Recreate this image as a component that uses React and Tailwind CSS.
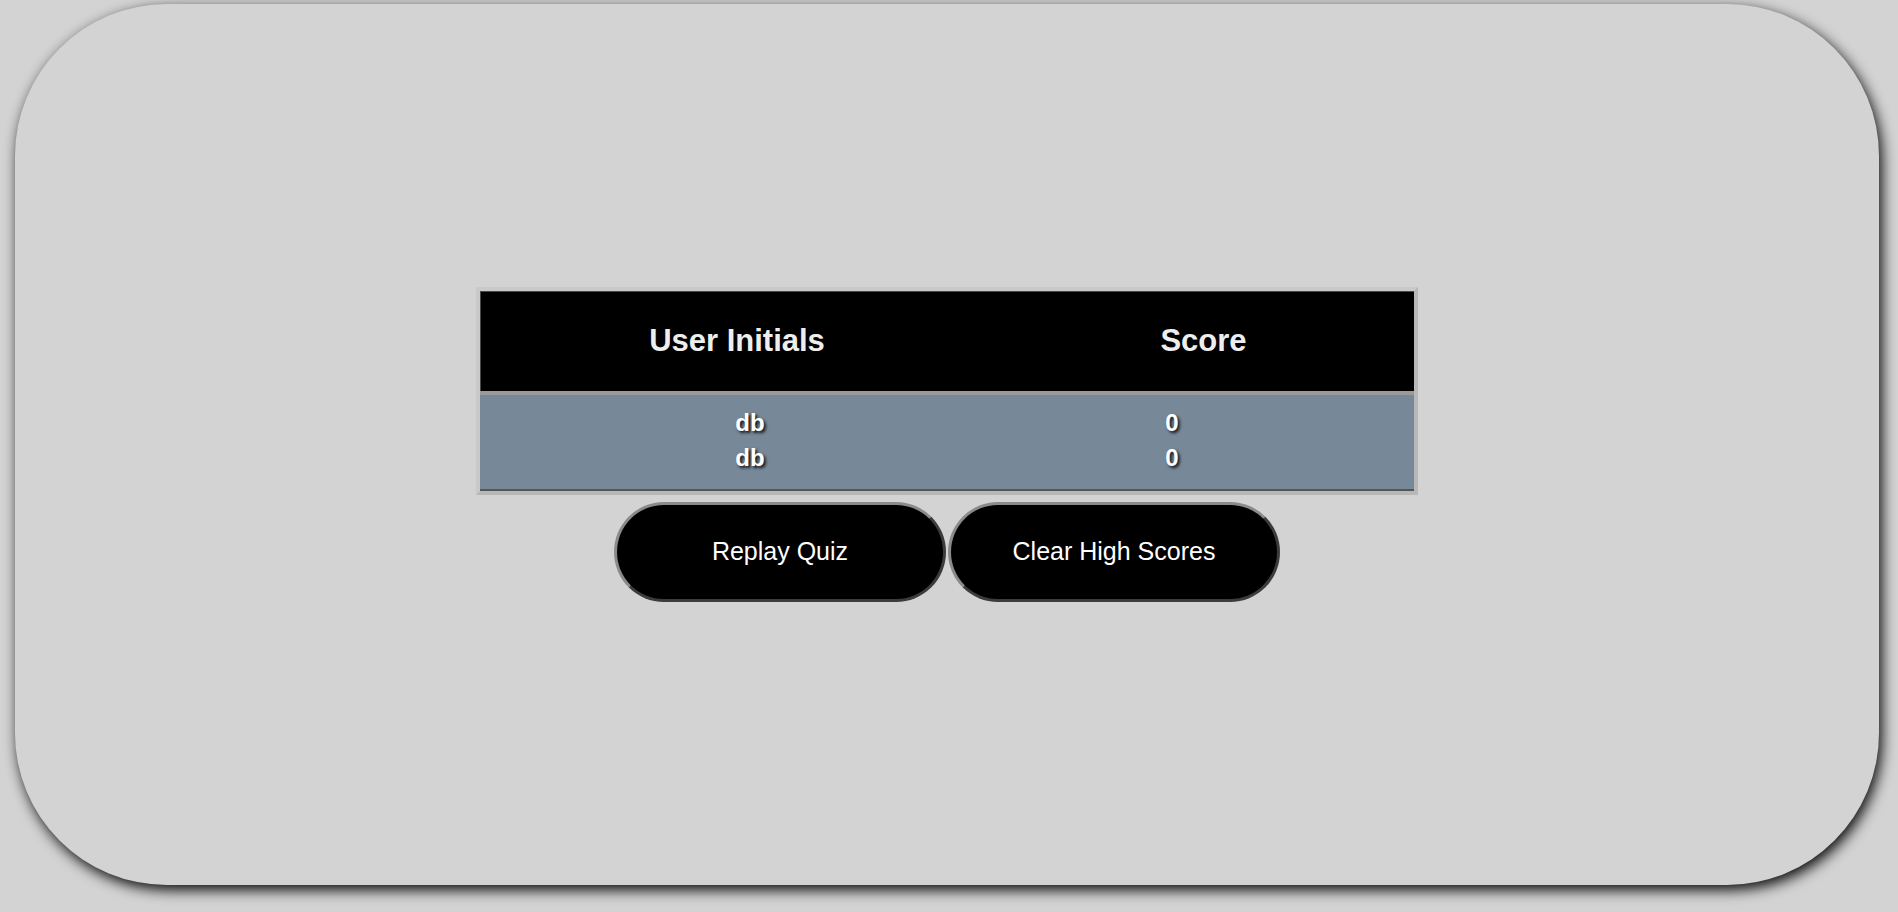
import React from 'react';

const scores = [
  { initials: 'db', score: 0 },
  { initials: 'db', score: 0 },
];

export default function App() {
  return (
    <div
      className="w-full h-[912px] bg-[#d3d3d3] pt-[4px] pl-[15px] overflow-hidden"
      style={{ fontFamily: '"Liberation Sans", Arial, Helvetica, sans-serif' }}
    >
      <div className="w-[1864px] h-[881px] rounded-[152px] bg-[#d3d3d3] shadow-[3px_5px_14px_rgba(0,0,0,0.95)] flex flex-col items-center justify-center">
        {/* High score table */}
        <div className="w-[942px] border-4 border-t-[#c9c9c9] border-l-[#c9c9c9] border-b-[#b8b8b8] border-r-[#b8b8b8]">
          <div className="h-[100px] bg-black border-t border-l border-[#4a4a4a] grid grid-cols-[512px_1fr] items-center text-[31px] font-bold text-[#eeeeee] [text-shadow:2px_2px_3px_#000]">
            <div className="text-center">User Initials</div>
            <div className="text-center">Score</div>
          </div>
          <div className="h-[4px] bg-[#9a9a9a]" />
          <div className="h-[96px] pb-[4px] bg-[#778899] border-b-2 border-[#555] grid grid-cols-[540px_304px_1fr] content-center text-[24px] leading-[35px] font-bold text-white [text-shadow:2px_2px_3px_#111]">
            <div className="text-center">
              {scores.map((s, i) => (
                <div key={i}>{s.initials}</div>
              ))}
            </div>
            <div className="text-center">
              {scores.map((s, i) => (
                <div key={i}>{s.score}</div>
              ))}
            </div>
            <div />
          </div>
        </div>

        {/* Actions */}
        <div className="mt-[7px] flex gap-[2px]">
          <button className="w-[332px] h-[100px] rounded-full bg-black text-white text-[25px] border-[3px] border-t-[#8a8a8a] border-l-[#8a8a8a] border-b-[#3c3c3c] border-r-[#3c3c3c]">
            Replay Quiz
          </button>
          <button className="w-[332px] h-[100px] rounded-full bg-black text-white text-[25px] border-[3px] border-t-[#8a8a8a] border-l-[#8a8a8a] border-b-[#3c3c3c] border-r-[#3c3c3c]">
            Clear High Scores
          </button>
        </div>
      </div>
    </div>
  );
}
